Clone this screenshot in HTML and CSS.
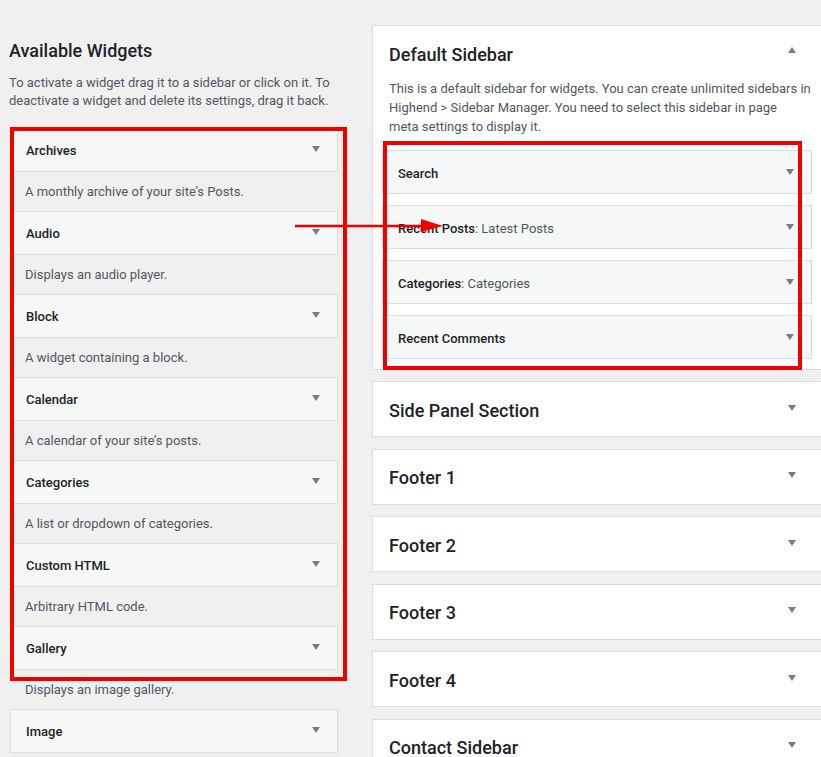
FILE: index.html
```html
<!DOCTYPE html>
<html lang="en">
<head>
<meta charset="utf-8">
<title>Widgets</title>
<link rel="stylesheet" href="styles.css">
</head>
<body>
<div class="page">
  <section class="available">
    <h2 class="section-title">Available Widgets</h2>
    <p class="intro">To activate a widget drag it to a sidebar or click on it. To deactivate a widget and delete its settings, drag it back.</p>
    <div class="widget-list">
      <div class="widget">
        <div class="widget-top"><span class="widget-title">Archives</span><span class="caret"></span></div>
        <p class="widget-desc">A monthly archive of your site’s Posts.</p>
      </div>
      <div class="widget">
        <div class="widget-top"><span class="widget-title">Audio</span><span class="caret"></span></div>
        <p class="widget-desc">Displays an audio player.</p>
      </div>
      <div class="widget">
        <div class="widget-top"><span class="widget-title">Block</span><span class="caret"></span></div>
        <p class="widget-desc">A widget containing a block.</p>
      </div>
      <div class="widget">
        <div class="widget-top"><span class="widget-title">Calendar</span><span class="caret"></span></div>
        <p class="widget-desc">A calendar of your site’s posts.</p>
      </div>
      <div class="widget">
        <div class="widget-top"><span class="widget-title">Categories</span><span class="caret"></span></div>
        <p class="widget-desc">A list or dropdown of categories.</p>
      </div>
      <div class="widget">
        <div class="widget-top"><span class="widget-title">Custom HTML</span><span class="caret"></span></div>
        <p class="widget-desc">Arbitrary HTML code.</p>
      </div>
      <div class="widget">
        <div class="widget-top"><span class="widget-title">Gallery</span><span class="caret"></span></div>
        <p class="widget-desc">Displays an image gallery.</p>
      </div>
      <div class="widget">
        <div class="widget-top"><span class="widget-title">Image</span><span class="caret"></span></div>
      </div>
    </div>
  </section>

  <section class="sidebars">
    <div class="sidebar open">
      <div class="sidebar-head"><h3 class="sidebar-title">Default Sidebar</h3><span class="caret up"></span></div>
      <p class="sidebar-desc">This is a default sidebar for widgets. You can create unlimited sidebars in Highend &gt; Sidebar Manager. You need to select this sidebar in page meta&nbsp;settings to display it.</p>
      <div class="sidebar-widgets">
        <div class="widget-top"><span class="widget-title">Search</span><span class="caret"></span></div>
        <div class="widget-top"><span class="widget-title">Recent Posts<span class="in-title">: Latest Posts</span></span><span class="caret"></span></div>
        <div class="widget-top"><span class="widget-title">Categories<span class="in-title">: Categories</span></span><span class="caret"></span></div>
        <div class="widget-top"><span class="widget-title">Recent Comments</span><span class="caret"></span></div>
      </div>
    </div>
    <div class="sidebar"><div class="sidebar-head"><h3 class="sidebar-title">Side Panel Section</h3><span class="caret"></span></div></div>
    <div class="sidebar"><div class="sidebar-head"><h3 class="sidebar-title">Footer 1</h3><span class="caret"></span></div></div>
    <div class="sidebar"><div class="sidebar-head"><h3 class="sidebar-title">Footer 2</h3><span class="caret"></span></div></div>
    <div class="sidebar"><div class="sidebar-head"><h3 class="sidebar-title">Footer 3</h3><span class="caret"></span></div></div>
    <div class="sidebar"><div class="sidebar-head"><h3 class="sidebar-title">Footer 4</h3><span class="caret"></span></div></div>
    <div class="sidebar"><div class="sidebar-head"><h3 class="sidebar-title">Contact Sidebar</h3><span class="caret"></span></div></div>
  </section>

  <div class="annot annot-left"></div>
  <div class="annot annot-right"></div>
  <svg class="annot-arrow" width="160" height="20" viewBox="0 0 160 20" aria-hidden="true">
    <line x1="0" y1="10" x2="132" y2="10" stroke="#f20000" stroke-width="2.5"/>
    <polygon points="126,3 148,10 126,16" fill="#f20000"/>
  </svg>
</div>
</body>
</html>
```

FILE: styles.css
```css
html, body {
  margin: 0;
  padding: 0;
}
body {
  background: #f0f0f1;
  color: #1d2327;
  font-family: Roboto, "Noto Sans", sans-serif;
  font-size: 13px;
  overflow: hidden;
  width: 821px;
  height: 757px;
}
.page {
  position: relative;
  display: flex;
  align-items: flex-start;
  padding-left: 10px;
}

/* Left column */
.available {
  width: 328px;
  flex: none;
}
.section-title {
  margin: 39px 0 0 -1px;
  font-size: 18px;
  line-height: 24px;
  font-weight: 500;
  color: #1d2327;
}
.intro {
  margin: 11px 0 0 -1px;
  line-height: 18.4px;
  color: #50575e;
}
.widget-list {
  margin-top: 17px;
  display: flex;
  flex-direction: column;
}
.widget-top {
  box-sizing: border-box;
  height: 44px;
  display: flex;
  align-items: center;
  justify-content: space-between;
  padding: 2px 17px 0 15px;
  background: #f6f7f7;
  border: 1px solid #dcdcde;
}
.widget-title {
  font-weight: 500;
  color: #1d2327;
}
.in-title {
  font-weight: 400;
  color: #50575e;
}
.caret {
  width: 0;
  height: 0;
  border-left: 4.5px solid transparent;
  border-right: 4.5px solid transparent;
  border-top: 6px solid #787c82;
  margin-top: -3px;
}
.caret.up {
  border-top: 0;
  border-bottom: 6px solid #787c82;
  margin-top: -8px;
}
.widget-desc {
  box-sizing: border-box;
  height: 39px;
  margin: 0;
  padding: 11px 15px 0;
  line-height: 18px;
  color: #50575e;
}

/* Right column */
.sidebars {
  margin-left: 34px;
  margin-top: 25px;
  width: 450px;
  flex: none;
  display: flex;
  flex-direction: column;
  gap: 11.5px;
}
.sidebar {
  background: #fff;
  border: 1px solid #dcdcde;
}
.sidebar.open {
  margin-bottom: -0.5px;
}
.sidebar-head {
  box-sizing: border-box;
  height: 54px;
  display: flex;
  align-items: center;
  justify-content: space-between;
  padding: 3px 25px 0 16px;
}
.sidebar-head .caret {
  margin-top: -6px;
}
.sidebar-head .caret.up {
  margin-top: -9px;
}
.sidebar-title {
  margin: 0;
  font-size: 18px;
  line-height: 24px;
  font-weight: 500;
  color: #1d2327;
}
.sidebar-desc {
  margin: -1px 0 0;
  padding: 0 6px 0 16px;
  line-height: 19px;
  color: #50575e;
}
.sidebar-widgets {
  margin-top: 14px;
  padding: 0 9px 10px;
  display: flex;
  flex-direction: column;
  gap: 11px;
}

/* Annotation overlay */
.annot {
  position: absolute;
  border: 4px solid #f20000;
  box-sizing: border-box;
}
.annot-left {
  left: 10px;
  top: 127px;
  width: 337px;
  height: 554px;
}
.annot-right {
  left: 383px;
  top: 141px;
  width: 419px;
  height: 229px;
}
.annot-arrow {
  position: absolute;
  left: 295px;
  top: 216px;
}
```
